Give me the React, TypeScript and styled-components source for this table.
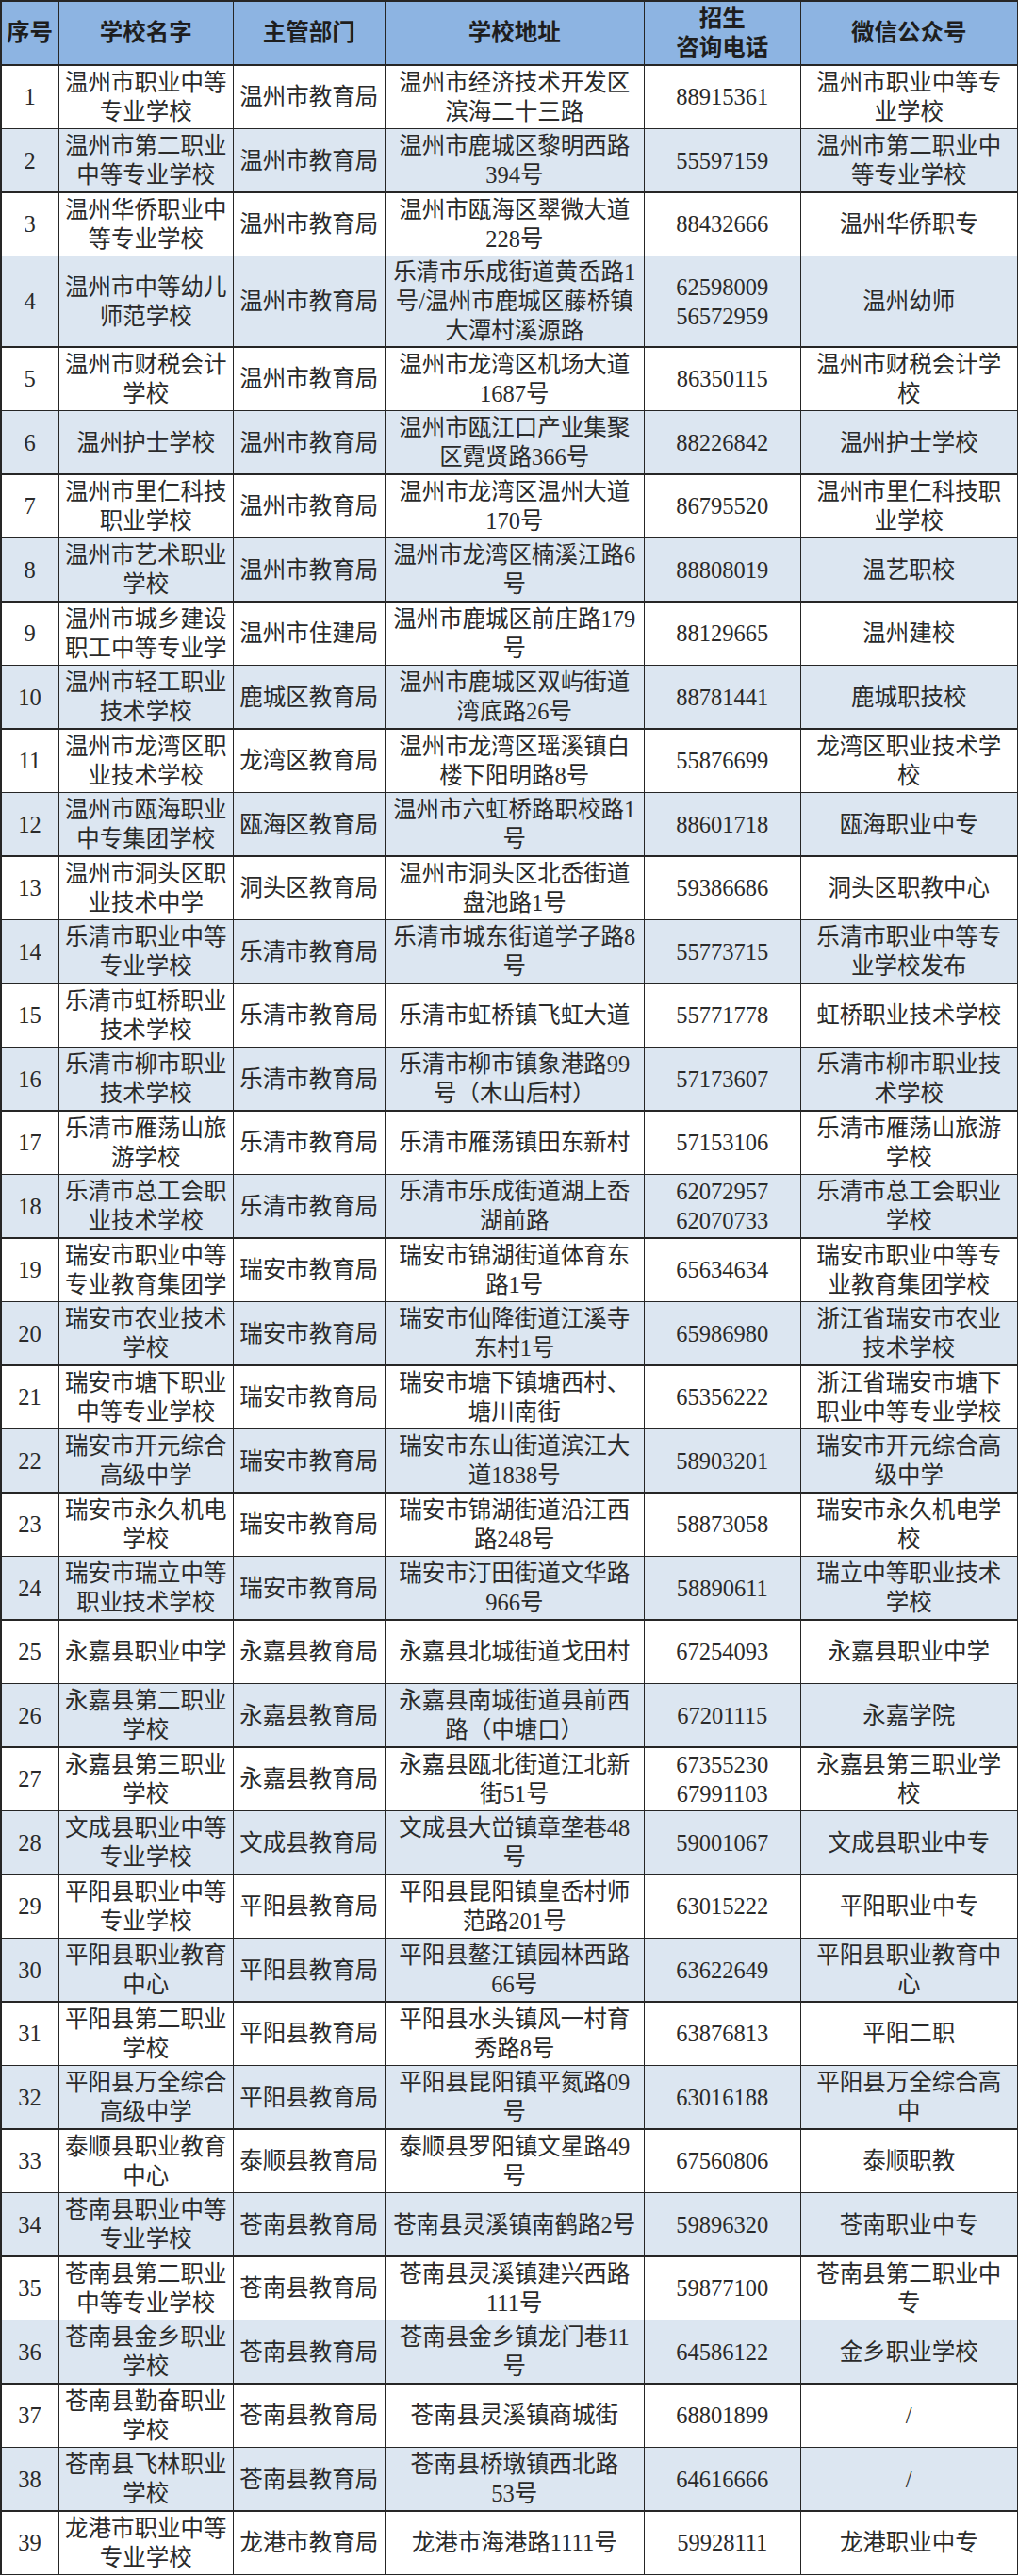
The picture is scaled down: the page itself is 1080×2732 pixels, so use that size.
import React from "react";
import styled, { createGlobalStyle } from "styled-components";

const GlobalStyle = createGlobalStyle`
  html, body {
    margin: 0;
    padding: 0;
    background: #ffffff;
  }
  body {
    font-family: "Liberation Serif", "Noto Sans CJK SC", serif;
  }
`;

const Sheet = styled.div`
  box-sizing: border-box;
  width: 1080px;
  display: grid;
  grid-template-columns: 60px 183.5px 159.5px 273.5px 164.5px 228.5px;
  grid-template-rows: 66.5px;
  grid-auto-rows: minmax(66px, auto);
  gap: 1.5px;
  padding: 1.5px;
  background: #262626;
`;

const BaseCell = styled.div`
  box-sizing: border-box;
  display: flex;
  align-items: center;
  justify-content: center;
  text-align: center;
  white-space: pre;
  overflow: hidden;
  padding: 1px 2px;
  font-family: "Liberation Serif", "Noto Sans CJK SC", serif;
  font-size: 24.5px;
  line-height: 31px;
  color: #2a2a2a;
`;

const HeadCell = styled(BaseCell)`
  background: #8db4e2;
  font-weight: 700;
  color: #1e1e1e;
`;

const Cell = styled(BaseCell)<{ $alt: boolean }>`
  background: ${(p) => (p.$alt ? "#dce6f1" : "#ffffff")};
`;

type Row = [string, string, string, string, string];

const headers = ["序号", "学校名字", "主管部门", "学校地址", "招生\n咨询电话", "微信公众号"];

const rows: Row[] = [
  ["温州市职业中等\n专业学校", "温州市教育局", "温州市经济技术开发区\n滨海二十三路", "88915361", "温州市职业中等专\n业学校"],
  ["温州市第二职业\n中等专业学校", "温州市教育局", "温州市鹿城区黎明西路\n394号", "55597159", "温州市第二职业中\n等专业学校"],
  ["温州华侨职业中\n等专业学校", "温州市教育局", "温州市瓯海区翠微大道\n228号", "88432666", "温州华侨职专"],
  ["温州市中等幼儿\n师范学校", "温州市教育局", "乐清市乐成街道黄岙路1\n号/温州市鹿城区藤桥镇\n大潭村溪源路", "62598009\n56572959", "温州幼师"],
  ["温州市财税会计\n学校", "温州市教育局", "温州市龙湾区机场大道\n1687号", "86350115", "温州市财税会计学\n校"],
  ["温州护士学校", "温州市教育局", "温州市瓯江口产业集聚\n区霓贤路366号", "88226842", "温州护士学校"],
  ["温州市里仁科技\n职业学校", "温州市教育局", "温州市龙湾区温州大道\n170号", "86795520", "温州市里仁科技职\n业学校"],
  ["温州市艺术职业\n学校", "温州市教育局", "温州市龙湾区楠溪江路6\n号", "88808019", "温艺职校"],
  ["温州市城乡建设\n职工中等专业学", "温州市住建局", "温州市鹿城区前庄路179\n号", "88129665", "温州建校"],
  ["温州市轻工职业\n技术学校", "鹿城区教育局", "温州市鹿城区双屿街道\n湾底路26号", "88781441", "鹿城职技校"],
  ["温州市龙湾区职\n业技术学校", "龙湾区教育局", "温州市龙湾区瑶溪镇白\n楼下阳明路8号", "55876699", "龙湾区职业技术学\n校"],
  ["温州市瓯海职业\n中专集团学校", "瓯海区教育局", "温州市六虹桥路职校路1\n号", "88601718", "瓯海职业中专"],
  ["温州市洞头区职\n业技术中学", "洞头区教育局", "温州市洞头区北岙街道\n盘池路1号", "59386686", "洞头区职教中心"],
  ["乐清市职业中等\n专业学校", "乐清市教育局", "乐清市城东街道学子路8\n号", "55773715", "乐清市职业中等专\n业学校发布"],
  ["乐清市虹桥职业\n技术学校", "乐清市教育局", "乐清市虹桥镇飞虹大道", "55771778", "虹桥职业技术学校"],
  ["乐清市柳市职业\n技术学校", "乐清市教育局", "乐清市柳市镇象港路99\n号（木山后村）", "57173607", "乐清市柳市职业技\n术学校"],
  ["乐清市雁荡山旅\n游学校", "乐清市教育局", "乐清市雁荡镇田东新村", "57153106", "乐清市雁荡山旅游\n学校"],
  ["乐清市总工会职\n业技术学校", "乐清市教育局", "乐清市乐成街道湖上岙\n湖前路", "62072957\n62070733", "乐清市总工会职业\n学校"],
  ["瑞安市职业中等\n专业教育集团学", "瑞安市教育局", "瑞安市锦湖街道体育东\n路1号", "65634634", "瑞安市职业中等专\n业教育集团学校"],
  ["瑞安市农业技术\n学校", "瑞安市教育局", "瑞安市仙降街道江溪寺\n东村1号", "65986980", "浙江省瑞安市农业\n技术学校"],
  ["瑞安市塘下职业\n中等专业学校", "瑞安市教育局", "瑞安市塘下镇塘西村、\n塘川南街", "65356222", "浙江省瑞安市塘下\n职业中等专业学校"],
  ["瑞安市开元综合\n高级中学", "瑞安市教育局", "瑞安市东山街道滨江大\n道1838号", "58903201", "瑞安市开元综合高\n级中学"],
  ["瑞安市永久机电\n学校", "瑞安市教育局", "瑞安市锦湖街道沿江西\n路248号", "58873058", "瑞安市永久机电学\n校"],
  ["瑞安市瑞立中等\n职业技术学校", "瑞安市教育局", "瑞安市汀田街道文华路\n966号", "58890611", "瑞立中等职业技术\n学校"],
  ["永嘉县职业中学", "永嘉县教育局", "永嘉县北城街道戈田村", "67254093", "永嘉县职业中学"],
  ["永嘉县第二职业\n学校", "永嘉县教育局", "永嘉县南城街道县前西\n路（中塘口）", "67201115", "永嘉学院"],
  ["永嘉县第三职业\n学校", "永嘉县教育局", "永嘉县瓯北街道江北新\n街51号", "67355230\n67991103", "永嘉县第三职业学\n校"],
  ["文成县职业中等\n专业学校", "文成县教育局", "文成县大峃镇章垄巷48\n号", "59001067", "文成县职业中专"],
  ["平阳县职业中等\n专业学校", "平阳县教育局", "平阳县昆阳镇皇岙村师\n范路201号", "63015222", "平阳职业中专"],
  ["平阳县职业教育\n中心", "平阳县教育局", "平阳县鳌江镇园林西路\n66号", "63622649", "平阳县职业教育中\n心"],
  ["平阳县第二职业\n学校", "平阳县教育局", "平阳县水头镇风一村育\n秀路8号", "63876813", "平阳二职"],
  ["平阳县万全综合\n高级中学", "平阳县教育局", "平阳县昆阳镇平氮路09\n号", "63016188", "平阳县万全综合高\n中"],
  ["泰顺县职业教育\n中心", "泰顺县教育局", "泰顺县罗阳镇文星路49\n号", "67560806", "泰顺职教"],
  ["苍南县职业中等\n专业学校", "苍南县教育局", "苍南县灵溪镇南鹤路2号", "59896320", "苍南职业中专"],
  ["苍南县第二职业\n中等专业学校", "苍南县教育局", "苍南县灵溪镇建兴西路\n111号", "59877100", "苍南县第二职业中\n专"],
  ["苍南县金乡职业\n学校", "苍南县教育局", "苍南县金乡镇龙门巷11\n号", "64586122", "金乡职业学校"],
  ["苍南县勤奋职业\n学校", "苍南县教育局", "苍南县灵溪镇商城街", "68801899", "/"],
  ["苍南县飞林职业\n学校", "苍南县教育局", "苍南县桥墩镇西北路\n53号", "64616666", "/"],
  ["龙港市职业中等\n专业学校", "龙港市教育局", "龙港市海港路1111号", "59928111", "龙港职业中专"],
];

export default function App() {
  return (
    <>
      <GlobalStyle />
      <Sheet>
        {headers.map((h) => (
          <HeadCell key={h}>{h}</HeadCell>
        ))}
        {rows.map((r, i) => {
          const alt = i % 2 === 1;
          return (
            <React.Fragment key={i}>
              <Cell $alt={alt}>{String(i + 1)}</Cell>
              {r.map((v, j) => (
                <Cell key={j} $alt={alt}>
                  {v}
                </Cell>
              ))}
            </React.Fragment>
          );
        })}
      </Sheet>
    </>
  );
}
